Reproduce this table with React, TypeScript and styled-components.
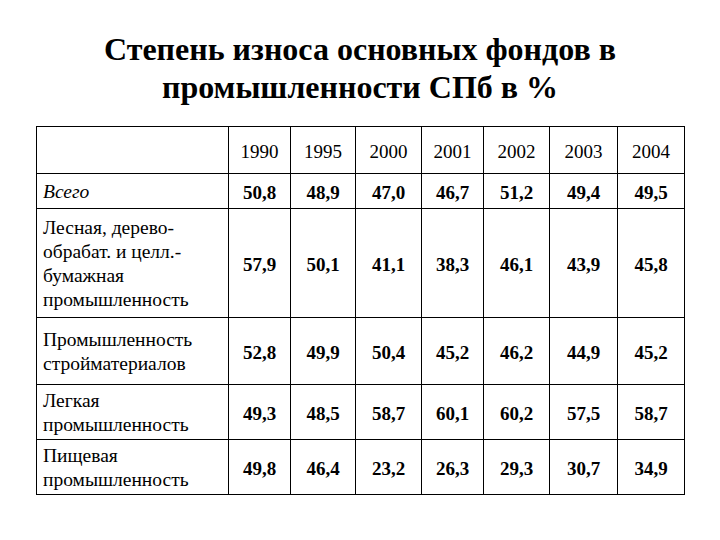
//-----Libs
import styled, { createGlobalStyle } from "styled-components";

//-----Data
const years = ["1990", "1995", "2000", "2001", "2002", "2003", "2004"];
const colWidths = [192, 62, 65, 66, 62, 66, 68, 67];

type Row = {
  label: string[];
  italic?: boolean;
  height: number;
  values: string[];
};

const rows: Row[] = [
  {
    label: ["Всего"],
    italic: true,
    height: 35,
    values: ["50,8", "48,9", "47,0", "46,7", "51,2", "49,4", "49,5"],
  },
  {
    label: ["Лесная, дерево-", "обрабат. и целл.-", "бумажная", "промышленность"],
    height: 109,
    values: ["57,9", "50,1", "41,1", "38,3", "46,1", "43,9", "45,8"],
  },
  {
    label: ["Промышленность", "стройматериалов"],
    height: 67,
    values: ["52,8", "49,9", "50,4", "45,2", "46,2", "44,9", "45,2"],
  },
  {
    label: ["Легкая", "промышленность"],
    height: 55,
    values: ["49,3", "48,5", "58,7", "60,1", "60,2", "57,5", "58,7"],
  },
  {
    label: ["Пищевая", "промышленность"],
    height: 55,
    values: ["49,8", "46,4", "23,2", "26,3", "29,3", "30,7", "34,9"],
  },
];

//-----Styles
const GlobalStyle = createGlobalStyle`
  html, body {
    margin: 0;
    padding: 0;
    background: #ffffff;
  }
`;

const Slide = styled.div`
  width: 720px;
  height: 540px;
  box-sizing: border-box;
  padding: 30px 0 0 36px;
  background: #ffffff;
  font-family: "Liberation Serif", "Times New Roman", serif;
  color: #000000;
  overflow: hidden;
`;

const Title = styled.div`
  margin: 0 36px 20px 0;
  font-family: "Liberation Serif", "Times New Roman", serif;
  font-size: 32px;
  line-height: 38px;
  font-weight: 700;
  text-align: center;
`;

const DataTable = styled.table`
  width: 648px;
  table-layout: fixed;
  border-collapse: collapse;
  border: 1px solid #000000;
  font-family: "Liberation Serif", "Times New Roman", serif;
`;

const HeadRow = styled.tr`
  height: 47px;
`;

const BodyRow = styled.tr<{ $h: number }>`
  height: ${(p) => p.$h}px;
`;

const Cell = styled.td`
  border: 1px solid #000000;
  padding: 0;
  font-family: "Liberation Serif", "Times New Roman", serif;
  font-size: 19px;
  line-height: 23px;
  color: #000000;
  text-align: center;
  vertical-align: middle;
`;

const YearCell = styled(Cell)`
  font-weight: 400;
  padding-top: 2px;
`;

const ValueCell = styled(Cell)`
  font-weight: 700;
  padding-top: 3px;
`;

const LabelCell = styled(Cell)<{ $italic?: boolean }>`
  text-align: left;
  padding: 1px 6px 0;
  font-size: 19.5px;
  line-height: 24px;
  font-style: ${(p) => (p.$italic ? "italic" : "normal")};
`;

const LabelLine = styled.div`
  white-space: nowrap;
`;

export default function App() {
  return (
    <>
      <GlobalStyle />
      <Slide>
        <Title>
          Степень износа основных фондов в
          <br />
          промышленности СПб в %
        </Title>
        <DataTable>
          <colgroup>
            {colWidths.map((w, i) => (
              <col key={i} style={{ width: w }} />
            ))}
          </colgroup>
          <tbody>
            <HeadRow>
              <Cell />
              {years.map((y) => (
                <YearCell key={y}>{y}</YearCell>
              ))}
            </HeadRow>
            {rows.map((r) => (
              <BodyRow key={r.label.join(" ")} $h={r.height}>
                <LabelCell $italic={r.italic}>
                  {r.label.map((l) => (
                    <LabelLine key={l}>{l}</LabelLine>
                  ))}
                </LabelCell>
                {r.values.map((v, i) => (
                  <ValueCell key={i}>{v}</ValueCell>
                ))}
              </BodyRow>
            ))}
          </tbody>
        </DataTable>
      </Slide>
    </>
  );
}
